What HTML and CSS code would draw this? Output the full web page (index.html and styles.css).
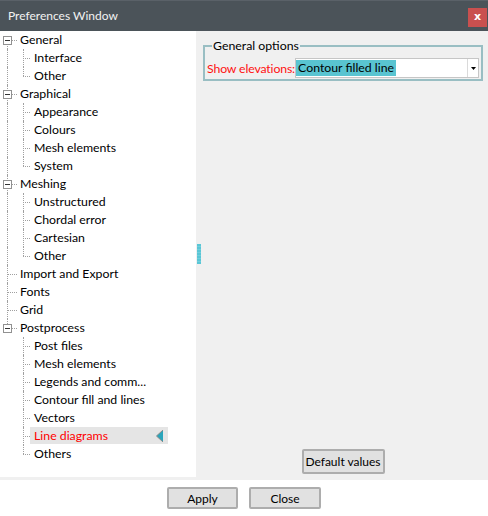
FILE: index.html
```html
<!DOCTYPE html>
<html>
<head>
<meta charset="utf-8">
<link rel="stylesheet" href="styles.css">
</head>
<body>
<div class="window">
  <div class="titlebar">
    <span class="title">Preferences Window</span>
    <span class="close">x</span>
  </div>
  <div class="main">
    <div class="tree">
      <div class="row"><span class="cell top"><i class="v-bot"></i><i class="h"></i><i class="box"></i></span><span class="label">General</span></div>
      <div class="row"><span class="cell"><i class="v-full"></i></span><span class="cell sub"><i class="v-full"></i><i class="h"></i></span><span class="label sublabel">Interface</span></div>
      <div class="row"><span class="cell"><i class="v-full"></i></span><span class="cell sub"><i class="v-top"></i><i class="h"></i></span><span class="label sublabel">Other</span></div>

      <div class="row"><span class="cell top"><i class="v-full"></i><i class="h"></i><i class="box"></i></span><span class="label">Graphical</span></div>
      <div class="row"><span class="cell"><i class="v-full"></i></span><span class="cell sub"><i class="v-full"></i><i class="h"></i></span><span class="label sublabel">Appearance</span></div>
      <div class="row"><span class="cell"><i class="v-full"></i></span><span class="cell sub"><i class="v-full"></i><i class="h"></i></span><span class="label sublabel">Colours</span></div>
      <div class="row"><span class="cell"><i class="v-full"></i></span><span class="cell sub"><i class="v-full"></i><i class="h"></i></span><span class="label sublabel">Mesh elements</span></div>
      <div class="row"><span class="cell"><i class="v-full"></i></span><span class="cell sub"><i class="v-top"></i><i class="h"></i></span><span class="label sublabel">System</span></div>

      <div class="row"><span class="cell top"><i class="v-full"></i><i class="h"></i><i class="box"></i></span><span class="label">Meshing</span></div>
      <div class="row"><span class="cell"><i class="v-full"></i></span><span class="cell sub"><i class="v-full"></i><i class="h"></i></span><span class="label sublabel">Unstructured</span></div>
      <div class="row"><span class="cell"><i class="v-full"></i></span><span class="cell sub"><i class="v-full"></i><i class="h"></i></span><span class="label sublabel">Chordal error</span></div>
      <div class="row"><span class="cell"><i class="v-full"></i></span><span class="cell sub"><i class="v-full"></i><i class="h"></i></span><span class="label sublabel">Cartesian</span></div>
      <div class="row"><span class="cell"><i class="v-full"></i></span><span class="cell sub"><i class="v-top"></i><i class="h"></i></span><span class="label sublabel">Other</span></div>

      <div class="row"><span class="cell top"><i class="v-full"></i><i class="h"></i></span><span class="label">Import and Export</span></div>
      <div class="row"><span class="cell top"><i class="v-full"></i><i class="h"></i></span><span class="label">Fonts</span></div>
      <div class="row"><span class="cell top"><i class="v-full"></i><i class="h"></i></span><span class="label">Grid</span></div>

      <div class="row"><span class="cell top"><i class="v-top"></i><i class="h"></i><i class="box"></i></span><span class="label">Postprocess</span></div>
      <div class="row"><span class="cell"></span><span class="cell sub"><i class="v-full"></i><i class="h"></i></span><span class="label sublabel">Post files</span></div>
      <div class="row"><span class="cell"></span><span class="cell sub"><i class="v-full"></i><i class="h"></i></span><span class="label sublabel">Mesh elements</span></div>
      <div class="row"><span class="cell"></span><span class="cell sub"><i class="v-full"></i><i class="h"></i></span><span class="label sublabel">Legends and comm...</span></div>
      <div class="row"><span class="cell"></span><span class="cell sub"><i class="v-full"></i><i class="h"></i></span><span class="label sublabel">Contour fill and lines</span></div>
      <div class="row"><span class="cell"></span><span class="cell sub"><i class="v-full"></i><i class="h"></i></span><span class="label sublabel">Vectors</span></div>
      <div class="row"><span class="cell"></span><span class="cell sub"><i class="v-full"></i><i class="h"></i></span><span class="label sublabel selected"><span>Line diagrams</span><svg class="marker" width="7" height="12" viewBox="0 0 7 12"><polygon points="7,0 0.5,6 7,12" fill="#2aa5bb"/><polyline points="7,0 0.5,6 7,12" fill="none" stroke="#8a8a8a" stroke-width="1"/></svg></span></div>
      <div class="row"><span class="cell"></span><span class="cell sub"><i class="v-top"></i><i class="h"></i></span><span class="label sublabel">Others</span></div>
    </div>
    <div class="splitter"><span class="grip"></span></div>
    <div class="panel">
      <fieldset class="group">
        <legend class="gtitle">General options</legend>
        <div class="field">
          <span class="flabel">Show elevations:</span>
          <div class="combo">
            <span class="cval">Contour filled line</span>
            <span class="carrow"><svg width="5" height="3" viewBox="0 0 5 3"><polygon points="0,0 5,0 2.5,3" fill="#000"/></svg></span>
          </div>
        </div>
      </fieldset>
      <button class="btn default">Default values</button>
    </div>
  </div>
  <div class="footer">
    <button class="btn apply">Apply</button>
    <button class="btn closebtn">Close</button>
  </div>
</div>
</body>
</html>
```

FILE: styles.css
```css
* { box-sizing: border-box; }
html, body { margin: 0; padding: 0; }
body {
  width: 488px;
  height: 516px;
  font-family: Lato, "Liberation Sans", sans-serif;
  font-size: 12.3px;
  color: #000;
  background: #fff;
  overflow: hidden;
}
.window { display: flex; flex-direction: column; height: 516px; }

.titlebar {
  height: 31px;
  background: #4b5359;
  border-top: 1px solid #5a6168;
  display: flex;
  justify-content: space-between;
  align-items: flex-start;
  padding-left: 8px;
}
.title {
  color: #f2f2f2;
  font-size: 12px;
  line-height: 30px;
}
.close {
  width: 19px;
  height: 19px;
  margin-top: 7px;
  margin-right: 1px;
  background: #c9504f;
  color: #fff;
  font-weight: bold;
  font-size: 11px;
  line-height: 18px;
  text-align: center;
  font-family: "DejaVu Sans", sans-serif;
}

.main {
  height: 449px;
  display: flex;
  background: #f0f0f0;
}
.tree {
  width: 196px;
  height: 446px;
  background: #fff;
}
.row {
  display: flex;
  height: 18px;
  align-items: stretch;
}
.cell {
  display: grid;
  width: 15px;
  flex: none;
  grid-template-columns: 7px 1fr;
  grid-template-rows: 9px 9px;
}
.cell.top { width: 20px; }
.cell.sub { grid-template-columns: 8px 1fr; }
.cell i { display: block; }
.v-full { grid-column: 2; grid-row: 1 / 3; border-left: 1px dotted #a0a0a0; }
.v-top { grid-column: 2; grid-row: 1; border-left: 1px dotted #a0a0a0; }
.v-bot { grid-column: 2; grid-row: 2; border-left: 1px dotted #a0a0a0; }
.h { grid-column: 2; grid-row: 2; border-top: 1px dotted #a0a0a0; width: 10px; }
.cell.sub .h { width: 7px; }
.box {
  grid-column: 1 / 3;
  grid-row: 1 / 3;
  width: 9px;
  height: 9px;
  margin-left: 3px;
  margin-top: 5px;
  align-self: start;
  justify-self: start;
  border: 1px solid #919191;
  background: linear-gradient(#333, #333) center / 5px 1px no-repeat, #fff;
}
.label {
  line-height: 17px;
  white-space: nowrap;
  padding-left: 0;
}
.sublabel { padding-left: 4px; }
.selected {
  display: flex;
  justify-content: space-between;
  align-items: center;
  width: 138px;
  height: 17px;
  background: #e5e5e5;
  color: #ff0000;
}
.marker { margin-right: 5px; }

.splitter {
  width: 5px;
  flex: none;
  display: flex;
  align-items: center;
}
.grip {
  width: 4px;
  height: 20px;
  margin-left: 1px;
  margin-top: -3px;
  background: repeating-linear-gradient(to bottom, #5ac6d6 0 2px, #72cfdc 2px 3px);
}

.panel {
  flex: 1;
  display: flex;
  flex-direction: column;
  padding: 7px 5px 6px 2px;
}
.group {
  margin: 0;
  padding: 4px 2px 1px 2px;
  border: 2px solid #99bec3;
  color: #000;
}
.gtitle {
  padding: 0 1px;
  margin-left: 5px;
  line-height: 16px;
  color: #000;
}
.field {
  display: flex;
  align-items: center;
  height: 20px;
}
.flabel {
  flex: none;
  margin-right: 0;
  letter-spacing: -0.15px;
  color: #ff1010;
  white-space: nowrap;
}
.combo {
  flex: 1;
  height: 20px;
  display: flex;
  background: #fff;
  border: 1px solid #c6c6c6;
}
.cval {
  margin: 1px 0 1px 0;
  padding: 0 2px;
  line-height: 16px;
  background: #59c4d1;
  white-space: nowrap;
}
.carrow {
  margin-left: auto;
  width: 11px;
  border-left: 1px solid #dadada;
  display: flex;
  align-items: center;
  justify-content: center;
}

.btn {
  font-family: inherit;
  font-size: 12px;
  color: #000;
  background: #e1e1e1;
  border: 2px solid #adadad;
  border-radius: 2px;
  padding: 0;
}
.default {
  margin-top: auto;
  align-self: center;
  width: 83px;
  height: 25px;
}
.footer {
  height: 36px;
  display: flex;
  justify-content: center;
  align-items: center;
  gap: 11px;
  background: #fff;
}
.apply { width: 71px; height: 22px; }
.closebtn { width: 72px; height: 22px; }
```
